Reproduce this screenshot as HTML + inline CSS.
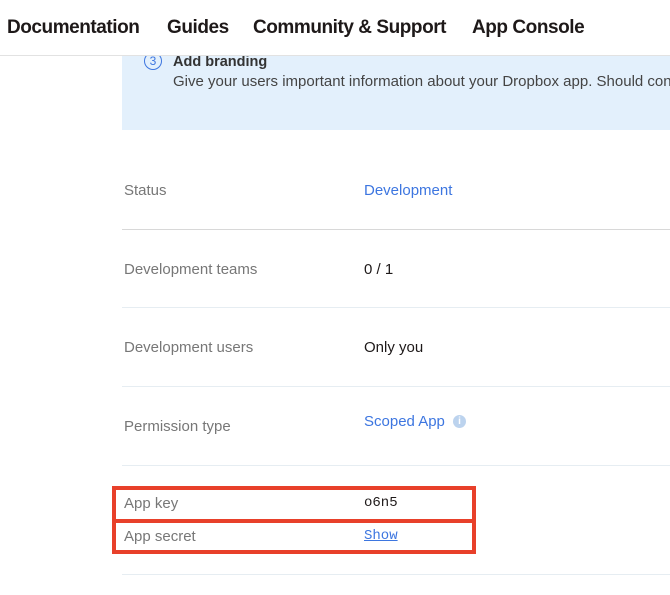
<!DOCTYPE html><html><head><style>
body{margin:0;width:670px;height:595px;background:#fff;position:relative;overflow:hidden;font-family:"Liberation Sans",sans-serif}
.nav{position:absolute;left:0;top:0;width:670px;height:55px;border-bottom:1px solid #e2e2e2;background:#fff;z-index:2}
.nav span{position:absolute;top:17px;font-size:19px;font-weight:bold;color:#1e1919;letter-spacing:-0.45px}
.blue{position:absolute;left:122px;top:40px;width:548px;height:90px;background:#e3f0fc}
.abs{position:absolute}
.lab{position:absolute;left:124px;font-size:15px;color:#777}
.val{position:absolute;left:364px;font-size:15px;color:#1e1919}
.lnk{color:#3d76e0}
.hr{position:absolute;left:122px;width:548px;height:1px;background:#e6edf2}
.red{position:absolute;border:4px solid #e8402a;box-sizing:border-box}
</style></head><body>
<div class="nav"><span style="left:7px">Documentation</span><span style="left:167px">Guides</span><span style="left:253px">Community &amp; Support</span><span style="left:472px">App Console</span></div>
<div class="blue"></div>
<div class="abs" style="left:144px;top:52px;width:16px;height:16px;border:1px solid #3d76e0;border-radius:50%;font-size:12px;color:#3d76e0;text-align:center;line-height:16px">3</div>
<div class="abs" style="left:173px;top:54px;font-size:14.5px;font-weight:bold;color:#333">Add branding</div>
<div class="abs" style="left:173px;top:73px;font-size:15px;color:#444;white-space:nowrap">Give your users important information about your Dropbox app. Should con</div>
<div class="lab" style="top:182px">Status</div><div class="val lnk" style="top:182px">Development</div>
<div class="hr" style="top:229px;background:#d8d8d8"></div>
<div class="lab" style="top:261px">Development teams</div><div class="val" style="top:261px">0 / 1</div>
<div class="hr" style="top:307px"></div>
<div class="lab" style="top:339px">Development users</div><div class="val" style="top:339px">Only you</div>
<div class="hr" style="top:386px"></div>
<div class="lab" style="top:418px">Permission type</div><div class="val lnk" style="top:413px">Scoped App</div>
<div class="abs" style="left:453px;top:415px;width:13px;height:13px;border-radius:50%;background:#bcd3ee;color:#fff;font-size:10px;font-weight:bold;text-align:center;line-height:13px">i</div>
<div class="hr" style="top:465px"></div>
<div class="red" style="left:112px;top:486px;width:364px;height:37px"></div>
<div class="red" style="left:112px;top:519px;width:364px;height:35px"></div>
<div class="lab" style="top:495px">App key</div><div class="val" style="top:495px;font-family:'Liberation Mono',monospace;font-size:14px">o6n5</div>
<div class="lab" style="top:528px">App secret</div><div class="val lnk" style="top:528px;font-family:'Liberation Mono',monospace;font-size:14px;text-decoration:underline">Show</div>
<div class="hr" style="top:574px"></div>
</body></html>
